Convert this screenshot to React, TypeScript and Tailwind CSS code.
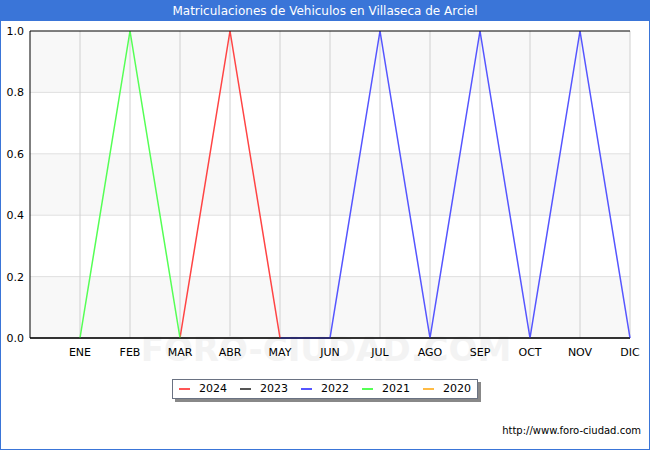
export default function App() {
  const X = (i: number) => 29 + i * 50;
  const Y = (v: number) => 10 + (1 - v) * 307;
  const months = ["ENE","FEB","MAR","ABR","MAY","JUN","JUL","AGO","SEP","OCT","NOV","DIC"];
  const pts = (a: [number, number][]) => a.map(([i, v]) => `${X(i)},${Y(v)}`).join(" ");
  const font = { fontFamily: "'DejaVu Sans', sans-serif" };
  return (
    <div className="w-[650px] h-[450px] bg-white border border-[#3a75d8] flex flex-col" style={font}>
      <div className="h-[20px] shrink-0 bg-[#3a75d8] text-white text-[12px] flex items-center justify-center">
        Matriculaciones de Vehiculos en Villaseca de Arciel
      </div>
      <svg width="648" height="340" className="shrink-0" style={font}>
        {[0, 2, 4].map((k) => (
          <rect key={k} x={X(0)} y={Y(0.2 * (k + 1))} width={600} height={61.4} fill="#f8f8f8" />
        ))}
        {[0.2, 0.4, 0.6, 0.8].map((v) => (
          <line key={v} x1={X(0)} x2={X(12)} y1={Y(v)} y2={Y(v)} stroke="#e0e0e0" />
        ))}
        {months.map((_, i) => (
          <line key={i} x1={X(i + 1)} x2={X(i + 1)} y1={Y(1)} y2={Y(0)} stroke="#d0d0d0" />
        ))}
        <text x="325" y="340" textAnchor="middle" fontSize="34" fill="#f3f3f3" fontWeight="bold">FORO-CIUDAD.COM</text>
        <polyline points={pts([[0,0],[12,0]])} fill="none" stroke="#333" strokeWidth="1.5" />
        <polyline points={pts([[5,0],[6,0],[7,1],[8,0],[9,1],[10,0],[11,1],[12,0]])} fill="none" stroke="#5555ff" strokeWidth="1.5" />
        <polyline points={pts([[3,0],[4,1],[5,0]])} fill="none" stroke="#ff4444" strokeWidth="1.5" />
        <polyline points={pts([[1,0],[2,1],[3,0]])} fill="none" stroke="#55ff55" strokeWidth="1.5" />
        <line x1={X(0)} x2={X(0)} y1={Y(1)} y2={Y(0)} stroke="#000" />
        <line x1={X(0)} x2={X(12)} y1={Y(1)} y2={Y(1)} stroke="#000" />
        <line x1={X(0)} x2={X(12)} y1={Y(0)} y2={Y(0)} stroke="#000" />
        {[0, 0.2, 0.4, 0.6, 0.8, 1].map((v) => (
          <text key={v} x="23" y={Y(v) + 4} textAnchor="end" fontSize="11" fill="#000">{v.toFixed(1)}</text>
        ))}
        {months.map((m, i) => (
          <text key={m} x={X(i + 1)} y="335" textAnchor="middle" fontSize="11" fill="#000">{m}</text>
        ))}
      </svg>
      <div className="flex justify-center mt-[18px]">
        <div className="h-[20px] px-[6px] border border-gray-500 bg-white shadow-[3px_3px_0_#888] flex items-center gap-[13px] text-[11px] text-black">
          {[["2024","#ff5555"],["2023","#555555"],["2022","#5555ff"],["2021","#55ff55"],["2020","#ffbb44"]].map(([l,c]) => (
            <div key={l} className="flex items-center gap-[9px]">
              <span className="w-[11px] h-[2px] inline-block" style={{ background: c }} />
              <span>{l}</span>
            </div>
          ))}
        </div>
      </div>
      <div className="text-[10px] text-black text-right pr-[8px] mt-[24px]">http://www.foro-ciudad.com</div>
    </div>
  );
}
